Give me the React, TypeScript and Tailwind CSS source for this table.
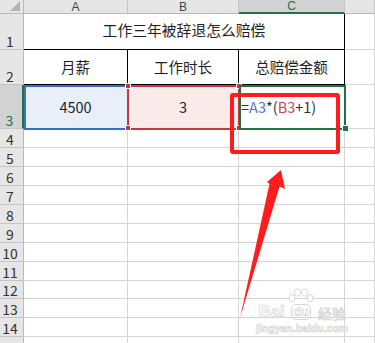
import clsx from "clsx";

const font = "font-['Noto_Sans_CJK_SC','Noto_Sans',sans-serif]";

// row numbers below the data block; each is one grid line
const blankRows = [4, 5, 6, 7, 8, 9, 10, 11, 12, 13, 14];

function ColHead({ label, active }: { label: string; active?: boolean }) {
  return (
    <div
      className={clsx(
        "flex items-center justify-center border-r border-[#c4c4c4] font-['Liberation_Sans',sans-serif] text-[12px] leading-[12px]",
        active
          ? "border-b-2 border-b-[#217346] bg-[#d2d2d2] text-[#217346]"
          : "border-b border-b-[#b9b9b9] bg-[#e6e6e6] text-[#444]"
      )}
    >
      {label}
    </div>
  );
}

function RowHead({ n, active }: { n?: number; active?: boolean }) {
  return (
    <div
      className={clsx(
        "flex items-end justify-center border-b border-[#c4c4c4] pb-[1px] pr-[3px] text-[14px] leading-none",
        active
          ? "border-r-2 border-r-[#217346] bg-[#d2d2d2] text-[#217346]"
          : "border-r border-r-[#b9b9b9] bg-[#e6e6e6] text-[#333]"
      )}
    >
      {n}
    </div>
  );
}

function Grid({ className }: { className?: string }) {
  return <div className={clsx("border-b border-r border-[#d4d4d4]", className)} />;
}

function Paw() {
  return (
    <svg width="30" height="16" viewBox="0 0 30 16" className="block">
      <g fill="#fff" stroke="#d6d6d6" strokeWidth="1">
        <ellipse cx="6" cy="10" rx="3" ry="3.6" />
        <ellipse cx="11.5" cy="4.5" rx="3" ry="3.8" />
        <ellipse cx="18.5" cy="4.5" rx="3" ry="3.8" />
        <ellipse cx="24" cy="10" rx="3" ry="3.6" />
      </g>
    </svg>
  );
}

export default function App() {
  return (
    <div className={clsx("relative h-[343px] w-[375px] overflow-hidden bg-white text-[#1f1f1f]", font)}>
      <div className="grid grid-cols-[24px_104px_111px_106px_30px] grid-rows-[14px_36px_35px_44px_repeat(11,18.94px)_20px]">
        {/* column headers */}
        <div className="relative border-b border-r border-[#b9b9b9] bg-[#e6e6e6]">
          <div className="absolute bottom-[2px] right-[3px] h-0 w-0 border-b-[10px] border-l-[10px] border-b-[#b4b4b4] border-l-transparent" />
        </div>
        <ColHead label="A" />
        <ColHead label="B" />
        <ColHead label="C" active />
        <ColHead label="" />

        {/* row 1: merged title */}
        <RowHead n={1} />
        <div className="col-span-3 flex items-center justify-center border-b border-r border-black pb-[3px] text-[14.8px]">
          工作三年被辞退怎么赔偿
        </div>
        <Grid />

        {/* row 2: column titles */}
        <RowHead n={2} />
        <div className="flex items-center justify-center border-b border-r border-black text-[14.5px]">月薪</div>
        <div className="flex items-center justify-center border-b border-r border-black text-[14.5px]">工作时长</div>
        <div className="flex items-center justify-center border-b border-r border-black text-[14.5px]">总赔偿金额</div>
        <Grid />

        {/* row 3: values and the formula */}
        <RowHead n={3} active />
        <div className="flex items-center justify-center border-b border-r border-black bg-[#e9eff9] text-[14.5px]">4500</div>
        <div className="flex items-center justify-center border-b border-r border-black bg-[#fbeaea] text-[14.5px]">3</div>
        <div className="flex items-center border-b border-r border-black pl-[2px] text-[14.5px] text-[#333]">
          =<span className="text-[#4a7bd0]">A3</span>*(<span className="text-[#d0464f]">B3</span>+1)
        </div>
        <Grid />

        {blankRows.map((n) => (
          <div key={n} className="contents">
            <RowHead n={n} />
            <Grid />
            <Grid />
            <Grid />
            <Grid />
          </div>
        ))}

        {/* row 15 only peeks in at the bottom edge */}
        <RowHead />
        <Grid />
        <Grid />
        <Grid />
        <Grid />
      </div>

      {/* reference highlights of the formula */}
      <div className="absolute left-[24px] top-[85px] h-[45px] w-[105px] border-2 border-[#3c6fc4]" />
      <div className="absolute left-[127px] top-[85px] h-[45px] w-[113px] border-2 border-[#c9363e]" />
      <div className="absolute left-[125px] top-[83px] h-[6px] w-[6px] border border-white bg-[#c9363e]" />
      <div className="absolute left-[125px] top-[125px] h-[6px] w-[6px] border border-white bg-[#c9363e]" />
      <div className="absolute left-[236px] top-[83px] h-[6px] w-[6px] border border-white bg-[#c9363e]" />
      <div className="absolute left-[236px] top-[125px] h-[6px] w-[6px] border border-white bg-[#c9363e]" />

      {/* active cell */}
      <div className="absolute left-[239px] top-[85px] h-[45px] w-[107px] border-2 border-[#217346]" />
      <div className="absolute left-[342px] top-[125px] h-[7px] w-[7px] border border-white bg-[#217346]" />

      {/* annotation box and arrow */}
      <div className="absolute left-[230px] top-[93px] h-[61px] w-[110px] rounded-[3px] border-4 border-[#ff1c1c]" />
      <svg className="absolute left-0 top-0" width="375" height="343" viewBox="0 0 375 343">
        <polygon
          points="281,170 285,189 279.5,186.5 240,318 269.5,184 267,182"
          fill="#ff1c1c"
        />
      </svg>

      {/* watermark */}
      <div className="absolute left-[256px] top-[288px] flex flex-col items-center text-white [-webkit-text-stroke:0.7px_#d4d4d4]">
        <div className="flex items-end font-['Liberation_Sans',sans-serif] text-[17px] font-bold leading-none">
          <span>Bai</span>
          <span className="relative ml-[1px] flex flex-col items-center">
            <Paw />
            <span className="rounded-[5px] border border-[#d6d6d6] px-[1px] text-[13px] leading-[14px]">du</span>
          </span>
          <span className={clsx("ml-[2px] text-[14px] font-normal", font)}>经验</span>
        </div>
        <div className="mt-[3px] font-['Liberation_Sans',sans-serif] text-[10.5px] font-bold leading-none">
          jingyan.baidu.com
        </div>
      </div>
    </div>
  );
}
